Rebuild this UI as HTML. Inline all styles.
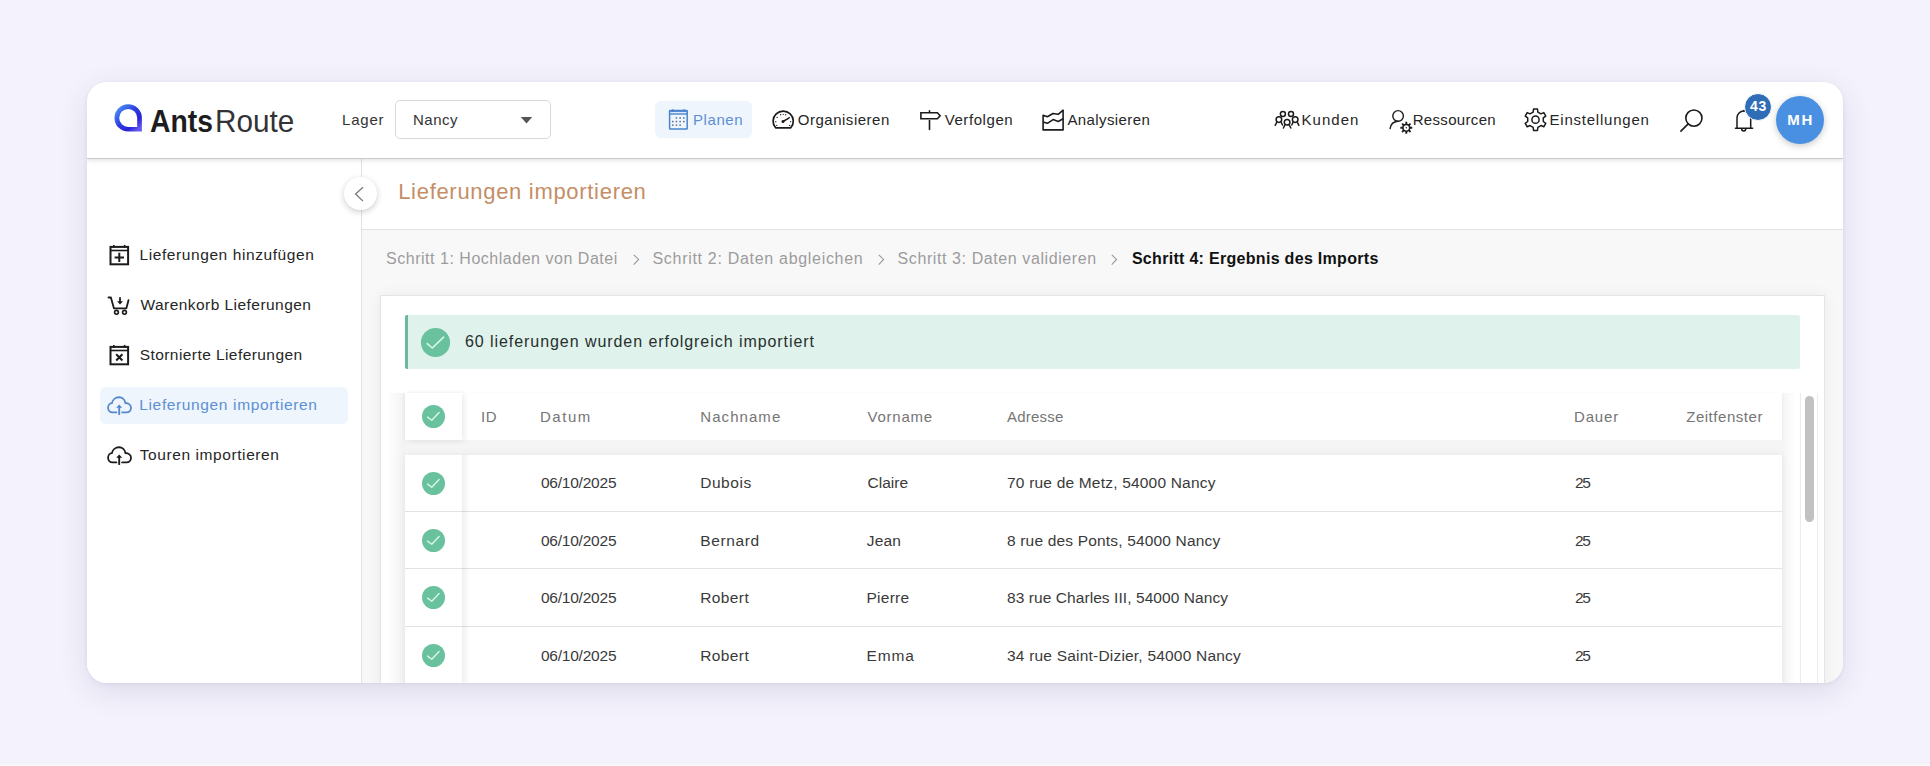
<!DOCTYPE html>
<html><head><meta charset="utf-8">
<style>
*{box-sizing:border-box;margin:0;padding:0}
html,body{width:1930px;height:766px;overflow:hidden}
body{background:#f4f2fc;font-family:"Liberation Sans",sans-serif;position:relative;color:#222}
.t{position:absolute;white-space:nowrap;line-height:1;z-index:20}
.ic{position:absolute;z-index:20;overflow:visible}
.b{position:absolute}
#card{position:absolute;left:87px;top:82px;width:1756px;height:601px;background:#fff;border-radius:20px;overflow:hidden;box-shadow:0 8px 30px rgba(60,50,110,0.12),0 1px 4px rgba(40,30,80,0.07)}
</style></head><body>
<div id="card">
  <!-- content gray -->
  <div class="b" style="left:275px;top:77px;width:1481px;height:524px;background:#f8f8f8"></div>
  <!-- title area -->
  <div class="b" style="left:275px;top:77px;width:1481px;height:71px;background:#fff;border-bottom:1px solid #e2e2e2"></div>
  <!-- sidebar -->
  <div class="b" style="left:0;top:77px;width:275px;height:524px;background:#fff;border-right:1px solid #e3e3e3"></div>
  <div class="b" style="left:13px;top:305px;width:248px;height:37px;background:#eef5fd;border-radius:6px"></div>
  <!-- panel -->
  <div class="b" style="left:293px;top:213px;width:1445px;height:420px;background:#fff;border:1px solid #e4e4e4;box-shadow:0 0 14px rgba(0,0,0,0.06)"></div>
  <!-- banner -->
  <div class="b" style="left:318px;top:233px;width:1395px;height:54px;background:#e0f2ec;border-left:3px solid #6db89b;border-radius:2px"></div>
  <!-- table -->
  <div class="b" style="left:318px;top:311px;width:1377px;height:47px;background:#fff;box-shadow:0 1px 4px rgba(0,0,0,0.05)"></div>
  <div class="b" style="left:318px;top:358px;width:1377px;height:15px;background:#f5f5f5"></div>
  <div class="b" style="left:318px;top:373px;width:1377px;height:240px;background:#fff;box-shadow:0 0 8px rgba(0,0,0,0.07)"></div>
  <div class="b" style="left:318px;top:429px;width:1377px;height:1px;background:#e2e2e2"></div>
  <div class="b" style="left:318px;top:486px;width:1377px;height:1px;background:#e2e2e2"></div>
  <div class="b" style="left:318px;top:544px;width:1377px;height:1px;background:#e2e2e2"></div>
  <!-- sticky col shadows -->
  <div class="b" style="left:318px;top:311px;width:57px;height:47px;background:#fff;box-shadow:2px 1px 6px rgba(0,0,0,0.09)"></div>
  <div class="b" style="left:375px;top:373px;width:8px;height:240px;background:linear-gradient(to right,rgba(0,0,0,0.06),rgba(0,0,0,0))"></div>
  <div class="b" style="left:300px;top:311px;width:18px;height:300px;background:linear-gradient(to left,rgba(0,0,0,0.05),rgba(0,0,0,0))"></div>
  <div class="b" style="left:1695px;top:311px;width:14px;height:300px;background:linear-gradient(to right,rgba(0,0,0,0.045),rgba(0,0,0,0))"></div>
  <!-- scrollbar -->
  <div class="b" style="left:1713px;top:311px;width:18px;height:300px;background:#fff;border-left:1px solid #ececec;border-right:1px solid #ececec"></div>
  <div class="b" style="left:1718px;top:314px;width:9px;height:126px;background:#c1c1c1;border-radius:4.5px"></div>
  <!-- header -->
  <div class="b" style="left:0;top:0;width:1756px;height:77px;background:#fff;border-bottom:1px solid #cacaca;box-shadow:0 2px 4px rgba(0,0,0,0.10)"></div>
  <div class="b" style="left:308px;top:18px;width:156px;height:39px;border:1px solid #d9d9d9;border-radius:5px"></div>
  <div class="b" style="left:568px;top:19px;width:97px;height:37px;background:#eef5fd;border-radius:6px"></div>
  <div class="b" style="left:1689px;top:13.6px;width:48px;height:48px;background:#4a90e2;border-radius:50%;box-shadow:0 2px 7px rgba(0,0,0,0.22)"></div>
  <!-- collapse button -->
  <div class="b" style="left:257px;top:95px;width:33px;height:33px;background:#fff;border-radius:50%;box-shadow:0 2px 6px rgba(0,0,0,0.2)"></div>
</div>
<svg class="ic" style="left:518px;top:114px" width="16" height="12" viewBox="0 0 16 12"><path d="M2.8 3 H14.2 L8.5 9.5 Z" fill="#555"/></svg>
<svg class="ic" style="left:350px;top:184px" width="18" height="20" viewBox="0 0 18 20"><path d="M13 3.3 L5.6 10 L13 17.1" fill="none" stroke="#777" stroke-width="1.3"/></svg>
<div class="b" style="left:0;top:762px;width:1930px;height:4px;background:linear-gradient(to bottom,#f2f0f6,#f3f2f7 40%,#fdfcff)"></div>
<svg class=ic style="left:112px;top:102px" width="32" height="32" viewBox="0 0 32 32" ><defs><linearGradient id="lg" x1="0" y1="0" x2="1" y2="1"><stop offset="0" stop-color="#4f95f5"/><stop offset="0.45" stop-color="#2b3fe0"/><stop offset="0.75" stop-color="#2a22d6"/><stop offset="1" stop-color="#6a5cf2"/></linearGradient></defs><path d="M27.55 15.9 V27.25 H16.2 A11.35 11.35 0 1 1 27.55 15.9 Z" fill="none" stroke="url(#lg)" stroke-width="4.7"/></svg>
<svg class=ic style="left:664px;top:104px" width="30" height="30" viewBox="0 0 30 30" ><rect x="5.6" y="6.6" width="17.6" height="18.4" rx="0.6" fill="none" stroke="#4a84cf" stroke-width="1.5"/><line x1="5.6" y1="10" x2="23.2" y2="10" stroke="#4a84cf" stroke-width="1.4"/><line x1="5.6" y1="7.6" x2="23.2" y2="7.6" stroke="#4a84cf" stroke-width="1"/><line x1="8.9" y1="5.2" x2="8.9" y2="8" stroke="#4a84cf" stroke-width="1.4"/><line x1="19.9" y1="5.2" x2="19.9" y2="8" stroke="#4a84cf" stroke-width="1.4"/><rect x="11.7" y="13.2" width="1.5" height="1.5" fill="#5a6f8f"/><rect x="15.4" y="13.2" width="1.5" height="1.5" fill="#5a6f8f"/><rect x="19.1" y="13.2" width="1.5" height="1.5" fill="#5a6f8f"/><rect x="8.0" y="16.8" width="1.5" height="1.5" fill="#5a6f8f"/><rect x="11.7" y="16.8" width="1.5" height="1.5" fill="#5a6f8f"/><rect x="15.4" y="16.8" width="1.5" height="1.5" fill="#5a6f8f"/><rect x="19.1" y="16.8" width="1.5" height="1.5" fill="#5a6f8f"/><rect x="8.0" y="20.4" width="1.5" height="1.5" fill="#5a6f8f"/><rect x="11.7" y="20.4" width="1.5" height="1.5" fill="#5a6f8f"/><rect x="15.4" y="20.4" width="1.5" height="1.5" fill="#5a6f8f"/></svg>
<svg class=ic style="left:768px;top:105px" width="30" height="30" viewBox="0 0 30 30" ><path d="M7.6 22.8 A10.1 10.1 0 1 1 22.8 22.8 Z" fill="none" stroke="#1b1b1b" stroke-width="1.7" stroke-linejoin="round"/><line x1="15" y1="16.5" x2="20.8" y2="13.2" stroke="#1b1b1b" stroke-width="1.5" stroke-linecap="round"/><circle cx="15" cy="16.6" r="1.5" fill="#1b1b1b"/><circle cx="7.80" cy="16.70" r="0.65" fill="#1b1b1b"/><circle cx="9.14" cy="12.46" r="0.65" fill="#1b1b1b"/><circle cx="12.67" cy="9.75" r="0.65" fill="#1b1b1b"/><circle cx="15.20" cy="9.30" r="0.65" fill="#1b1b1b"/><circle cx="17.73" cy="9.75" r="0.65" fill="#1b1b1b"/><circle cx="21.26" cy="12.46" r="0.65" fill="#1b1b1b"/><circle cx="22.60" cy="16.70" r="0.65" fill="#1b1b1b"/><circle cx="21.61" cy="20.40" r="0.65" fill="#1b1b1b"/><circle cx="8.79" cy="20.40" r="0.65" fill="#1b1b1b"/></svg>
<svg class=ic style="left:915px;top:105px" width="30" height="30" viewBox="0 0 30 30" ><path d="M5.9 7.8 H22.4 L25.1 10.75 L22.4 13.7 H5.9 Z" fill="none" stroke="#1b1b1b" stroke-width="1.6" stroke-linejoin="miter"/><line x1="14.5" y1="5.2" x2="14.5" y2="7.8" stroke="#1b1b1b" stroke-width="1.6"/><line x1="14.5" y1="15.6" x2="14.5" y2="24.4" stroke="#1b1b1b" stroke-width="1.6" stroke-linecap="round"/></svg>
<svg class=ic style="left:1038px;top:105px" width="30" height="30" viewBox="0 0 30 30" ><path d="M5.1 10.3 L9.4 11.7 L14.9 8.5 L20.2 9.3 L25.1 5.2 V24.9 H5.1 Z" fill="none" stroke="#1b1b1b" stroke-width="1.6" stroke-linejoin="round"/><path d="M5.1 16.9 L9.4 18.3 L15.1 14.6 L20.2 16.5 L25.1 13.8" fill="none" stroke="#1b1b1b" stroke-width="1.6" stroke-linejoin="round"/></svg>
<svg class=ic style="left:1271px;top:104px" width="32" height="32" viewBox="0 0 32 32" ><g fill="none" stroke="#1b1b1b" stroke-width="1.5" stroke-linecap="round"><circle cx="11.9" cy="10" r="2.5"/><circle cx="20" cy="10" r="2.5"/><circle cx="7.9" cy="15.6" r="2.8"/><circle cx="24.2" cy="15.6" r="2.8"/><circle cx="16.1" cy="18.3" r="2.8"/><path d="M5.6 18.6 L4.2 21.3 M10.3 18.6 L11.5 21"/><path d="M21.9 18.6 L20.8 21 M26.5 18.6 L27.9 21.3"/><path d="M13.8 21.2 L12.4 24 M18.4 21.2 L19.8 24"/></g></svg>
<svg class=ic style="left:1386px;top:104px" width="32" height="32" viewBox="0 0 32 32" ><circle cx="12.1" cy="11.9" r="5.3" fill="none" stroke="#1b1b1b" stroke-width="1.4"/><path d="M11.8 17.2 C7.5 17.6 4.6 20.6 4.1 24.6" fill="none" stroke="#1b1b1b" stroke-width="1.4" stroke-linecap="round"/><path d="M19.36 19.71 L19.36 17.87 L21.24 17.87 L21.24 19.71 L22.53 20.24 L23.83 18.95 L25.15 20.27 L23.86 21.57 L24.39 22.86 L26.23 22.86 L26.23 24.74 L24.39 24.74 L23.86 26.03 L25.15 27.33 L23.83 28.65 L22.53 27.36 L21.24 27.89 L21.24 29.73 L19.36 29.73 L19.36 27.89 L18.07 27.36 L16.77 28.65 L15.45 27.33 L16.74 26.03 L16.21 24.74 L14.37 24.74 L14.37 22.86 L16.21 22.86 L16.74 21.57 L15.45 20.27 L16.77 18.95 L18.07 20.24Z" fill="#1b1b1b"/><circle cx="20.3" cy="23.8" r="2.6" fill="#fff"/><circle cx="20.3" cy="23.8" r="0.7" fill="#1b1b1b"/></svg>
<svg class=ic style="left:1520px;top:104px" width="32" height="32" viewBox="0 0 32 32" ><path d="M13.16 8.05 L13.51 4.98 L17.49 4.98 L17.84 8.05 L20.96 9.85 L23.79 8.62 L25.77 12.06 L23.29 13.90 L23.29 17.50 L25.77 19.34 L23.79 22.78 L20.96 21.55 L17.84 23.35 L17.49 26.42 L13.51 26.42 L13.16 23.35 L10.04 21.55 L7.21 22.78 L5.23 19.34 L7.71 17.50 L7.71 13.90 L5.23 12.06 L7.21 8.62 L10.04 9.85Z" fill="none" stroke="#1b1b1b" stroke-width="1.5" stroke-linejoin="round"/><circle cx="15.5" cy="15.7" r="3.6" fill="none" stroke="#1b1b1b" stroke-width="1.5"/></svg>
<svg class=ic style="left:1675px;top:104px" width="32" height="32" viewBox="0 0 32 32" ><circle cx="18.9" cy="14.1" r="8.1" fill="none" stroke="#1b1b1b" stroke-width="1.6"/><line x1="13.2" y1="19.9" x2="5.9" y2="27.1" stroke="#1b1b1b" stroke-width="1.6" stroke-linecap="round"/></svg>
<svg class=ic style="left:1730px;top:104px" width="28" height="32" viewBox="0 0 28 32" ><path d="M7.0 24.2 V13.85 A6.85 6.85 0 0 1 20.7 13.85 V24.2" fill="none" stroke="#1b1b1b" stroke-width="1.5"/><line x1="5.5" y1="24.2" x2="22.6" y2="24.2" stroke="#1b1b1b" stroke-width="1.6" stroke-linecap="round"/><path d="M11.6 24.8 A2.1 2.1 0 0 0 15.8 24.8" fill="none" stroke="#1b1b1b" stroke-width="1.5"/><circle cx="13.85" cy="6.6" r="0.9" fill="#1b1b1b"/></svg>
<svg class=ic style="left:104px;top:240px" width="30" height="30" viewBox="0 0 30 30" ><rect x="6.5" y="6.9" width="17.6" height="17.4" fill="none" stroke="#1b1b1b" stroke-width="2"/><line x1="6.4" y1="10.5" x2="24.2" y2="10.5" stroke="#1b1b1b" stroke-width="1.6"/><line x1="9.8" y1="4.9" x2="9.8" y2="7.5" stroke="#1b1b1b" stroke-width="1.6"/><line x1="20.6" y1="4.9" x2="20.6" y2="7.5" stroke="#1b1b1b" stroke-width="1.6"/><path d="M15.3 12.7 V22 M10.6 17.4 H20" stroke="#1b1b1b" stroke-width="2"/></svg>
<svg class=ic style="left:104px;top:292px" width="30" height="30" viewBox="0 0 30 30" ><path d="M4.5 5.5 H6.9 L9.9 16.3 H22.4 L24.5 8.2" fill="none" stroke="#1b1b1b" stroke-width="1.8" stroke-linecap="round" stroke-linejoin="round"/><circle cx="12.5" cy="20.3" r="1.9" fill="none" stroke="#1b1b1b" stroke-width="1.6"/><circle cx="20.5" cy="20.3" r="1.9" fill="none" stroke="#1b1b1b" stroke-width="1.6"/><line x1="16" y1="5.3" x2="16" y2="10" stroke="#1b1b1b" stroke-width="1.8"/><path d="M13.1 9.2 H19 L16.05 12.4 Z" fill="#1b1b1b"/></svg>
<svg class=ic style="left:104px;top:340px" width="30" height="30" viewBox="0 0 30 30" ><rect x="6.5" y="6.9" width="17.6" height="17.4" fill="none" stroke="#1b1b1b" stroke-width="2"/><line x1="6.4" y1="10.5" x2="24.2" y2="10.5" stroke="#1b1b1b" stroke-width="1.6"/><line x1="9.8" y1="4.9" x2="9.8" y2="7.5" stroke="#1b1b1b" stroke-width="1.6"/><line x1="20.6" y1="4.9" x2="20.6" y2="7.5" stroke="#1b1b1b" stroke-width="1.6"/><path d="M12.2 14.3 L18.4 20.5 M18.4 14.3 L12.2 20.5" stroke="#1b1b1b" stroke-width="2"/></svg>
<svg class=ic style="left:103px;top:390px" width="34" height="34" viewBox="0 0 34 34" ><path transform="translate(16.55 0) scale(0.93 1) translate(-16.55 0)" d="M13.2 22.4 H9 C6.3 22.4 4.2 20.3 4.2 17.8 C4.2 15.3 6.0 13.3 8.3 13.1 C9.0 9.8 12.2 7.3 16.0 7.3 C19.6 7.3 22.3 9.8 22.9 13.0 C26.2 13.2 28.9 15.2 28.9 17.8 C28.9 20.3 26.8 22.4 24.2 22.4 H19.3" fill="none" stroke="#5588ca" stroke-width="1.9" stroke-linecap="round"/><line x1="16.2" y1="24.9" x2="16.2" y2="16" stroke="#5588ca" stroke-width="1.9"/><path d="M13.2 17.8 L16.2 14.4 L19.2 17.8 Z" fill="#5588ca"/></svg>
<svg class=ic style="left:103px;top:440px" width="34" height="34" viewBox="0 0 34 34" ><path transform="translate(16.55 0) scale(0.93 1) translate(-16.55 0)" d="M13.2 22.4 H9 C6.3 22.4 4.2 20.3 4.2 17.8 C4.2 15.3 6.0 13.3 8.3 13.1 C9.0 9.8 12.2 7.3 16.0 7.3 C19.6 7.3 22.3 9.8 22.9 13.0 C26.2 13.2 28.9 15.2 28.9 17.8 C28.9 20.3 26.8 22.4 24.2 22.4 H19.3" fill="none" stroke="#1b1b1b" stroke-width="1.9" stroke-linecap="round"/><line x1="16.2" y1="24.9" x2="16.2" y2="16" stroke="#1b1b1b" stroke-width="1.9"/><path d="M13.2 17.8 L16.2 14.4 L19.2 17.8 Z" fill="#1b1b1b"/></svg>
<svg class=ic style="left:630.5px;top:250px" width="12" height="20" viewBox="0 0 12 20" ><path d="M2.8 4.8 L7.6 9.4 L2.7 14.6" fill="none" stroke="#9a9a9a" stroke-width="1.15"/></svg>
<svg class=ic style="left:875.5px;top:250px" width="12" height="20" viewBox="0 0 12 20" ><path d="M2.8 4.8 L7.6 9.4 L2.7 14.6" fill="none" stroke="#9a9a9a" stroke-width="1.15"/></svg>
<svg class=ic style="left:1109.3px;top:250px" width="12" height="20" viewBox="0 0 12 20" ><path d="M2.8 4.8 L7.6 9.4 L2.7 14.6" fill="none" stroke="#9a9a9a" stroke-width="1.15"/></svg>
<svg class=ic style="left:418.7px;top:325.5px" width="33" height="33" viewBox="0 0 33 33" ><circle cx="16.5" cy="16.5" r="14.6" fill="#69c19d"/><path d="M426.9 343.1 L432 347.5 L443.3 336.7" fill="none" stroke="#d9f7ea" stroke-width="1.6" stroke-linecap="round" stroke-linejoin="round" transform="translate(-418.70,-325.50)"/></svg>
<svg class=ic style="left:419.8px;top:403.0px" width="27" height="27" viewBox="0 0 27 27" ><circle cx="13.5" cy="13.5" r="11.5" fill="#69c19d"/><path d="M427.4 417.1 L431.6 420.3 L438.9 412.5" fill="none" stroke="#d9f7ea" stroke-width="1.4" stroke-linecap="round" stroke-linejoin="round" transform="translate(-419.80,-403.00)"/></svg>
<svg class=ic style="left:419.8px;top:469.5px" width="27" height="27" viewBox="0 0 27 27" ><circle cx="13.5" cy="13.5" r="11.5" fill="#69c19d"/><path d="M427.4 483.6 L431.6 486.8 L438.9 479.0" fill="none" stroke="#d9f7ea" stroke-width="1.4" stroke-linecap="round" stroke-linejoin="round" transform="translate(-419.80,-469.50)"/></svg>
<svg class=ic style="left:419.8px;top:526.8px" width="27" height="27" viewBox="0 0 27 27" ><circle cx="13.5" cy="13.5" r="11.5" fill="#69c19d"/><path d="M427.4 540.9 L431.6 544.1 L438.9 536.3" fill="none" stroke="#d9f7ea" stroke-width="1.4" stroke-linecap="round" stroke-linejoin="round" transform="translate(-419.80,-526.80)"/></svg>
<svg class=ic style="left:419.8px;top:584.1px" width="27" height="27" viewBox="0 0 27 27" ><circle cx="13.5" cy="13.5" r="11.5" fill="#69c19d"/><path d="M427.4 598.2 L431.6 601.4 L438.9 593.6" fill="none" stroke="#d9f7ea" stroke-width="1.4" stroke-linecap="round" stroke-linejoin="round" transform="translate(-419.80,-584.10)"/></svg>
<svg class=ic style="left:419.8px;top:641.5px" width="27" height="27" viewBox="0 0 27 27" ><circle cx="13.5" cy="13.5" r="11.5" fill="#69c19d"/><path d="M427.4 655.6 L431.6 658.8 L438.9 651.0" fill="none" stroke="#d9f7ea" stroke-width="1.4" stroke-linecap="round" stroke-linejoin="round" transform="translate(-419.80,-641.50)"/></svg>
<div class="b" style="left:1744px;top:92.6px;width:28px;height:28px;background:#2f6db6;border-radius:50%;border:1.5px solid #fff;z-index:25"></div>
<div class=t style="left:342.10px;top:112.00px;font-size:15px;font-weight:400;color:#333;letter-spacing:0.783px;">Lager</div>
<div class=t style="left:413.00px;top:112.00px;font-size:15px;font-weight:400;color:#333;letter-spacing:0.496px;">Nancy</div>
<div class=t style="left:693.00px;top:112.00px;font-size:15px;font-weight:400;color:#5d90d3;letter-spacing:0.567px;">Planen</div>
<div class=t style="left:797.70px;top:112.00px;font-size:15px;font-weight:400;color:#262626;letter-spacing:0.524px;">Organisieren</div>
<div class=t style="left:944.70px;top:112.00px;font-size:15px;font-weight:400;color:#262626;letter-spacing:0.570px;">Verfolgen</div>
<div class=t style="left:1067.40px;top:112.00px;font-size:15px;font-weight:400;color:#262626;letter-spacing:0.397px;">Analysieren</div>
<div class=t style="left:1301.60px;top:112.00px;font-size:15px;font-weight:400;color:#262626;letter-spacing:1.005px;">Kunden</div>
<div class=t style="left:1412.70px;top:112.00px;font-size:15px;font-weight:400;color:#262626;letter-spacing:0.323px;">Ressourcen</div>
<div class=t style="left:1549.60px;top:112.00px;font-size:15px;font-weight:400;color:#262626;letter-spacing:0.765px;">Einstellungen</div>
<div class=t style="left:149.80px;top:105.00px;font-size:32px;font-weight:700;color:#1d1d1f;letter-spacing:0.000px;transform:scaleX(0.8846);transform-origin:0 0;">Ants</div>
<div class=t style="left:215.14px;top:105.00px;font-size:32px;font-weight:400;color:#333335;letter-spacing:0.000px;transform:scaleX(0.9286);transform-origin:0 0;">Route</div>
<div class=t style="left:139.50px;top:247.00px;font-size:15.5px;font-weight:400;color:#262626;letter-spacing:0.586px;">Lieferungen hinzufügen</div>
<div class=t style="left:140.50px;top:297.00px;font-size:15.5px;font-weight:400;color:#262626;letter-spacing:0.450px;">Warenkorb Lieferungen</div>
<div class=t style="left:139.70px;top:347.00px;font-size:15.5px;font-weight:400;color:#262626;letter-spacing:0.430px;">Stornierte Lieferungen</div>
<div class=t style="left:139.30px;top:397.00px;font-size:15.5px;font-weight:400;color:#5d90d3;letter-spacing:0.632px;">Lieferungen importieren</div>
<div class=t style="left:139.70px;top:447.00px;font-size:15.5px;font-weight:400;color:#262626;letter-spacing:0.588px;">Touren importieren</div>
<div class=t style="left:398.20px;top:181.00px;font-size:22px;font-weight:400;color:#c48e66;letter-spacing:0.694px;">Lieferungen importieren</div>
<div class=t style="left:386.00px;top:251.00px;font-size:16px;font-weight:400;color:#9c9c9c;letter-spacing:0.522px;">Schritt 1: Hochladen von Datei</div>
<div class=t style="left:652.50px;top:251.00px;font-size:16px;font-weight:400;color:#9c9c9c;letter-spacing:0.695px;">Schritt 2: Daten abgleichen</div>
<div class=t style="left:897.60px;top:251.00px;font-size:16px;font-weight:400;color:#9c9c9c;letter-spacing:0.588px;">Schritt 3: Daten validieren</div>
<div class=t style="left:1131.90px;top:251.00px;font-size:16px;font-weight:700;color:#111;letter-spacing:0.301px;">Schritt 4: Ergebnis des Imports</div>
<div class=t style="left:464.90px;top:334.00px;font-size:16px;font-weight:400;color:#27302c;letter-spacing:0.943px;">60 lieferungen wurden erfolgreich importiert</div>
<div class=t style="left:481.10px;top:409.00px;font-size:15px;font-weight:400;color:#757575;letter-spacing:0.533px;">ID</div>
<div class=t style="left:539.90px;top:409.00px;font-size:15px;font-weight:400;color:#757575;letter-spacing:1.554px;">Datum</div>
<div class=t style="left:700.30px;top:409.00px;font-size:15px;font-weight:400;color:#757575;letter-spacing:1.058px;">Nachname</div>
<div class=t style="left:867.60px;top:409.00px;font-size:15px;font-weight:400;color:#757575;letter-spacing:0.751px;">Vorname</div>
<div class=t style="left:1007.00px;top:409.00px;font-size:15px;font-weight:400;color:#757575;letter-spacing:0.219px;">Adresse</div>
<div class=t style="left:1574.00px;top:409.00px;font-size:15px;font-weight:400;color:#757575;letter-spacing:0.835px;">Dauer</div>
<div class=t style="left:1686.20px;top:409.00px;font-size:15px;font-weight:400;color:#757575;letter-spacing:0.533px;">Zeitfenster</div>
<div class=t style="left:540.90px;top:475.00px;font-size:15.5px;font-weight:400;color:#3a3a3a;letter-spacing:-0.217px;">06/10/2025</div>
<div class=t style="left:700.20px;top:475.00px;font-size:15.5px;font-weight:400;color:#3a3a3a;letter-spacing:0.560px;">Dubois</div>
<div class=t style="left:867.50px;top:475.00px;font-size:15.5px;font-weight:400;color:#3a3a3a;letter-spacing:0.027px;">Claire</div>
<div class=t style="left:1007.00px;top:475.00px;font-size:15.5px;font-weight:400;color:#3a3a3a;letter-spacing:0.196px;">70 rue de Metz, 54000 Nancy</div>
<div class=t style="left:1575.00px;top:475.00px;font-size:15.5px;font-weight:400;color:#3a3a3a;letter-spacing:-1.420px;">25</div>
<div class=t style="left:540.90px;top:533.00px;font-size:15.5px;font-weight:400;color:#3a3a3a;letter-spacing:-0.217px;">06/10/2025</div>
<div class=t style="left:700.20px;top:533.00px;font-size:15.5px;font-weight:400;color:#3a3a3a;letter-spacing:0.630px;">Bernard</div>
<div class=t style="left:866.80px;top:533.00px;font-size:15.5px;font-weight:400;color:#3a3a3a;letter-spacing:0.136px;">Jean</div>
<div class=t style="left:1007.00px;top:533.00px;font-size:15.5px;font-weight:400;color:#3a3a3a;letter-spacing:0.175px;">8 rue des Ponts, 54000 Nancy</div>
<div class=t style="left:1575.00px;top:533.00px;font-size:15.5px;font-weight:400;color:#3a3a3a;letter-spacing:-1.420px;">25</div>
<div class=t style="left:540.90px;top:590.00px;font-size:15.5px;font-weight:400;color:#3a3a3a;letter-spacing:-0.217px;">06/10/2025</div>
<div class=t style="left:700.20px;top:590.00px;font-size:15.5px;font-weight:400;color:#3a3a3a;letter-spacing:0.397px;">Robert</div>
<div class=t style="left:866.50px;top:590.00px;font-size:15.5px;font-weight:400;color:#3a3a3a;letter-spacing:0.255px;">Pierre</div>
<div class=t style="left:1007.00px;top:590.00px;font-size:15.5px;font-weight:400;color:#3a3a3a;letter-spacing:0.073px;">83 rue Charles III, 54000 Nancy</div>
<div class=t style="left:1575.00px;top:590.00px;font-size:15.5px;font-weight:400;color:#3a3a3a;letter-spacing:-1.420px;">25</div>
<div class=t style="left:540.90px;top:648.00px;font-size:15.5px;font-weight:400;color:#3a3a3a;letter-spacing:-0.217px;">06/10/2025</div>
<div class=t style="left:700.20px;top:648.00px;font-size:15.5px;font-weight:400;color:#3a3a3a;letter-spacing:0.397px;">Robert</div>
<div class=t style="left:866.50px;top:648.00px;font-size:15.5px;font-weight:400;color:#3a3a3a;letter-spacing:0.879px;">Emma</div>
<div class=t style="left:1007.00px;top:648.00px;font-size:15.5px;font-weight:400;color:#3a3a3a;letter-spacing:0.203px;">34 rue Saint-Dizier, 54000 Nancy</div>
<div class=t style="left:1575.00px;top:648.00px;font-size:15.5px;font-weight:400;color:#3a3a3a;letter-spacing:-1.420px;">25</div>
<div class=t style="left:1750.00px;top:99.00px;font-size:14px;font-weight:700;color:#fff;letter-spacing:0.614px;z-index:30;">43</div>
<div class=t style="left:1787.30px;top:112.00px;font-size:15px;font-weight:700;color:#fff;letter-spacing:1.705px;">MH</div>
</body></html>
